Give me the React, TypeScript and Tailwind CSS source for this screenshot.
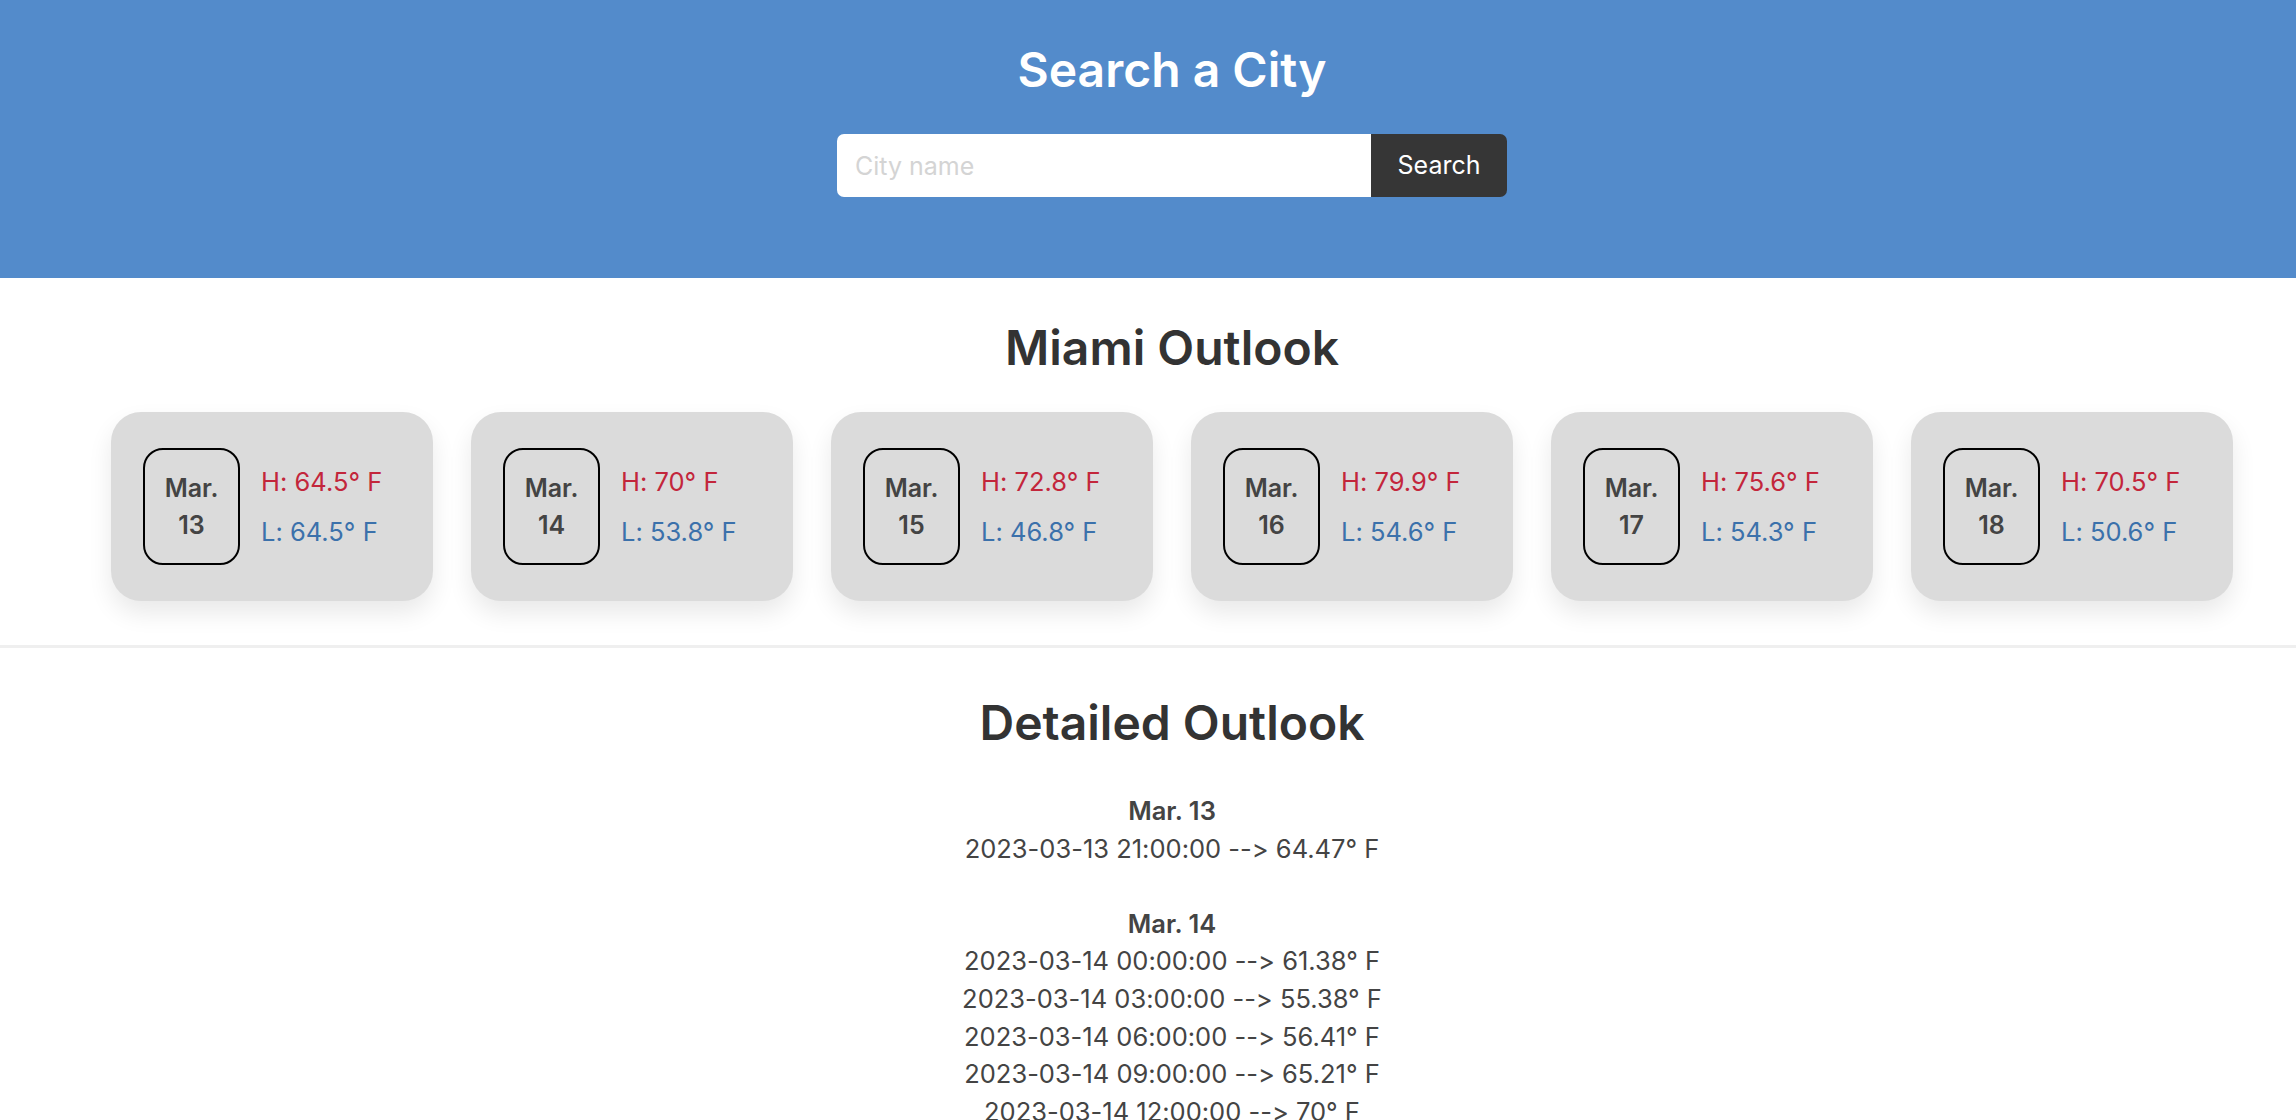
import React from 'react';

interface DayForecast {
  month: string;
  day: string;
  high: string;
  low: string;
}

const days: DayForecast[] = [
  { month: 'Mar.', day: '13', high: '64.5', low: '64.5' },
  { month: 'Mar.', day: '14', high: '70', low: '53.8' },
  { month: 'Mar.', day: '15', high: '72.8', low: '46.8' },
  { month: 'Mar.', day: '16', high: '79.9', low: '54.6' },
  { month: 'Mar.', day: '17', high: '75.6', low: '54.3' },
  { month: 'Mar.', day: '18', high: '70.5', low: '50.6' },
];

const details: { label: string; rows: string[] }[] = [
  { label: 'Mar. 13', rows: ['2023-03-13 21:00:00 --> 64.47° F'] },
  {
    label: 'Mar. 14',
    rows: [
      '2023-03-14 00:00:00 --> 61.38° F',
      '2023-03-14 03:00:00 --> 55.38° F',
      '2023-03-14 06:00:00 --> 56.41° F',
      '2023-03-14 09:00:00 --> 65.21° F',
      '2023-03-14 12:00:00 --> 70° F',
    ],
  },
];

const DayCard: React.FC<{ d: DayForecast }> = ({ d }) => (
  <div className="w-[322px] h-[189px] shrink-0 rounded-[30px] bg-[#dbdbdb] shadow-[0_12px_24px_rgba(0,0,0,0.09)] flex items-center pl-[32px]">
    <div className="w-[97px] h-[117px] border-2 border-black rounded-[20px] flex flex-col items-center justify-center text-[25px] leading-[37px] font-semibold text-[#444]">
      <span>{d.month}</span>
      <span>{d.day}</span>
    </div>
    <div className="ml-[21px] flex flex-col text-[25.5px] leading-[50px]">
      <span className="text-[#c3263b]">H: {d.high}° F</span>
      <span className="text-[#3b71ab]">L: {d.low}° F</span>
    </div>
  </div>
);

export default function App() {
  return (
    <div className="w-full min-h-screen overflow-hidden bg-white">
      <div className="w-[2344px] font-['Inter','Noto_Sans',sans-serif] [font-variant-ligatures:no-contextual] [font-feature-settings:'calt'_0]">
        <header className="h-[278px] bg-[#538bcb] flex flex-col items-center pt-[41px]">
          <h1 className="text-[48px] leading-[58px] font-semibold text-white">Search a City</h1>
          <form className="mt-[35px] flex h-[63px]" onSubmit={(e) => e.preventDefault()}>
            <input
              type="text"
              placeholder="City name"
              className="w-[534px] h-full bg-white rounded-l-[7px] px-[18px] text-[25px] text-[#333] placeholder:text-[#d4d4d4] outline-none"
            />
            <button
              type="submit"
              className="w-[136px] h-full bg-[#363636] text-white text-[25px] rounded-r-[7px]"
            >
              Search
            </button>
          </form>
        </header>

        <section className="flex flex-col items-center pt-[41px]">
          <h2 className="text-[48px] leading-[58px] font-semibold text-[#333]">Miami Outlook</h2>
          <div className="mt-[35px] flex gap-[38px]">
            {days.map((d) => (
              <DayCard key={d.day} d={d} />
            ))}
          </div>
        </section>

        <div className="mt-[44px] h-[3px] bg-[#efefef]" />

        <section className="flex flex-col items-center pt-[46px] pb-[40px]">
          <h2 className="text-[48px] leading-[58px] font-semibold text-[#333]">Detailed Outlook</h2>
          <div className="mt-[40px] flex flex-col items-center text-[25.5px] leading-[37.6px] text-[#444]">
            {details.map((g) => (
              <div key={g.label} className="flex flex-col items-center mb-[37.6px]">
                <span className="font-semibold">{g.label}</span>
                {g.rows.map((r) => (
                  <span key={r}>{r}</span>
                ))}
              </div>
            ))}
          </div>
        </section>
      </div>
    </div>
  );
}
